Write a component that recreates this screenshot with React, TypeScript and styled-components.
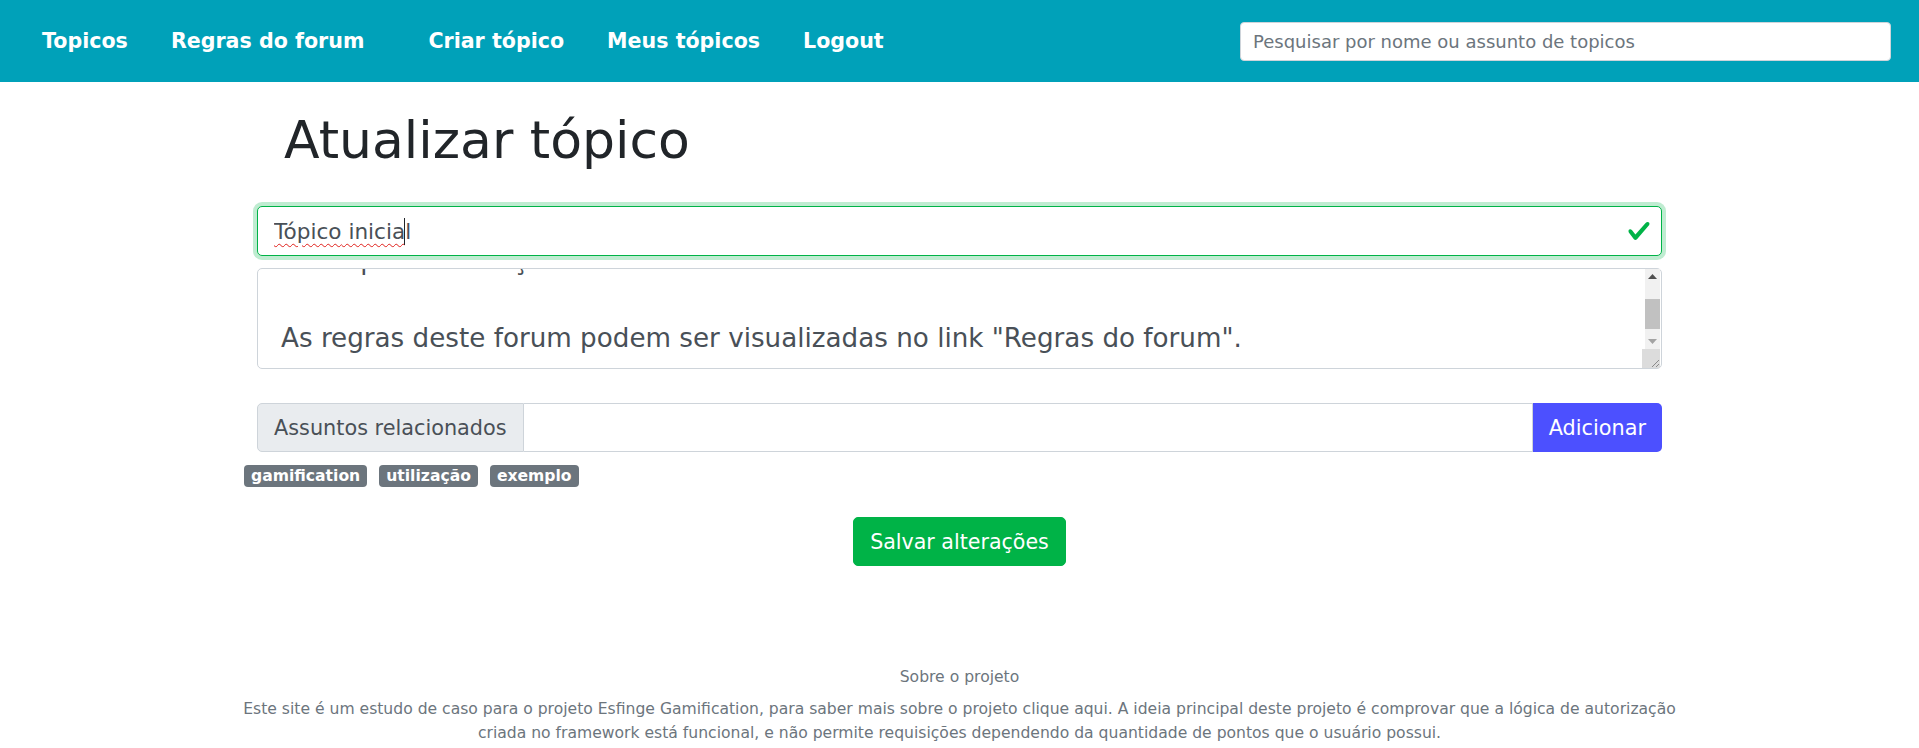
import React, { useEffect, useRef } from "react";
import styled, { createGlobalStyle } from "styled-components";

const GlobalStyle = createGlobalStyle`
  html, body { margin: 0; padding: 0; background: #fff; }
  body {
    font-family: "DejaVu Sans", Verdana, sans-serif;
    color: #212529;
  }
  * { box-sizing: border-box; }
`;

const FONT = `"DejaVu Sans", Verdana, sans-serif`;

const NavBar = styled.nav`
  height: 82px;
  background: #00a1b9;
  display: flex;
  align-items: center;
  justify-content: space-between;
  padding: 0 28px 0 20.5px;
`;

const NavGroups = styled.div`
  display: flex;
  align-items: center;
  gap: 21px;
`;

const NavGroup = styled.div`
  display: flex;
  align-items: center;
`;

const NavLink = styled.a`
  color: #fff;
  font-weight: 700;
  font-size: 20.6px;
  text-decoration: none;
  padding: 0 21.5px;
  white-space: nowrap;
`;

const SearchInput = styled.input`
  width: 651px;
  height: 39px;
  border: 1px solid #ced4da;
  border-radius: 4px;
  padding: 0 12px;
  font-family: ${FONT};
  font-size: 18px;
  color: #495057;
  background: #fff;
  &::placeholder { color: #6c757d; }
`;

const Main = styled.main`
  width: 1405px;
  margin: 0 auto;
  padding-top: 27px;
  display: flex;
  flex-direction: column;
`;

const Title = styled.h1`
  margin: 0;
  padding-left: 27px;
  font-size: 52px;
  font-weight: 400;
  line-height: 62px;
  color: #212529;
`;

const Field = styled.div`
  position: relative;
  margin-top: 35px;
`;

const TitleInput = styled.input`
  width: 100%;
  height: 50px;
  border: 1px solid #00b347;
  border-radius: 5px;
  padding: 0 48px 0 16px;
  font-family: ${FONT};
  font-size: 21.6px;
  color: #495057;
  background: #fff;
  box-shadow: 0 0 0 4px rgba(0, 179, 71, 0.25);
  outline: none;
`;

const SpellOverlay = styled.div`
  position: absolute;
  left: 17px;
  top: 0;
  height: 50px;
  display: flex;
  align-items: center;
  font-family: ${FONT};
  font-size: 21.6px;
  color: transparent;
  white-space: pre;
  pointer-events: none;
`;

const Misspelled = styled.span`
  text-decoration: underline wavy #e0201b;
  text-decoration-thickness: 1px;
  text-underline-offset: 4px;
`;

const Caret = styled.span`
  display: inline-block;
  width: 1px;
  height: 27px;
  background: #212529;
`;

const ValidIcon = styled.svg`
  position: absolute;
  right: 11px;
  top: 13px;
  width: 24px;
  height: 24px;
  pointer-events: none;
`;

const AreaWrap = styled.div`
  position: relative;
  margin-top: 12px;
`;

const TextArea = styled.textarea`
  width: 100%;
  height: 101px;
  border: 1px solid #ced4da;
  border-radius: 5px;
  padding: 8px 36px 8px 23px;
  font-family: ${FONT};
  font-size: 26.2px;
  line-height: 39px;
  color: #495057;
  background: #fff;
  resize: none;
  overflow: hidden;
  outline: none;
  display: block;
`;

const ScrollBar = styled.div`
  position: absolute;
  top: 1px;
  right: 2px;
  bottom: 1px;
  width: 15px;
  display: flex;
  flex-direction: column;
  align-items: flex-end;
  pointer-events: none;
`;

const ScrollButton = styled.div`
  width: 15px;
  height: 15px;
  background: #f1f1f1;
  display: flex;
  align-items: center;
  justify-content: center;
`;

const ScrollTrack = styled.div`
  width: 15px;
  flex: 1;
  background: #f1f1f1;
  padding-top: 15px;
`;

const ScrollThumb = styled.div`
  width: 15px;
  height: 30px;
  background: #c1c1c1;
`;

const ScrollCorner = styled.div`
  width: 18px;
  height: 19px;
  background: #dcdcdc;
  display: flex;
  align-items: flex-end;
  justify-content: flex-end;
`;

const InputGroup = styled.div`
  margin-top: 34px;
  display: flex;
  height: 49px;
`;

const GroupAddon = styled.span`
  display: flex;
  align-items: center;
  padding: 0 16px;
  background: #e9ecef;
  border: 1px solid #ced4da;
  border-radius: 5px 0 0 5px;
  font-size: 20.8px;
  color: #495057;
  white-space: nowrap;
`;

const GroupInput = styled.input`
  flex: 1;
  min-width: 0;
  border: 1px solid #ced4da;
  border-left: none;
  padding: 0 16px;
  font-family: ${FONT};
  font-size: 20.8px;
  color: #495057;
  outline: none;
`;

const AddButton = styled.button`
  border: none;
  background: #4c50ff;
  color: #fff;
  font-family: ${FONT};
  font-size: 20.8px;
  padding: 0 16px;
  border-radius: 0 5px 5px 0;
  cursor: pointer;
`;

const BadgeList = styled.div`
  margin-top: 13px;
  margin-left: -13px;
  display: flex;
  gap: 12px;
`;

const Badge = styled.span`
  display: inline-block;
  background: #6c757d;
  color: #fff;
  font-weight: 700;
  font-size: 15.6px;
  line-height: 16px;
  padding: 3px 7px;
  border-radius: 4px;
`;

const Actions = styled.div`
  margin-top: 30px;
  display: flex;
  justify-content: center;
`;

const SaveButton = styled.button`
  height: 49px;
  padding: 0 16px;
  border: 1px solid #00b347;
  background: #00b347;
  color: #fff;
  font-family: ${FONT};
  font-size: 20.6px;
  border-radius: 5px;
  cursor: pointer;
`;

const Footer = styled.footer`
  margin-top: 99px;
  display: flex;
  flex-direction: column;
  align-items: center;
  color: #6c757d;
  font-size: 15.6px;
  text-align: center;
`;

const FooterTitle = styled.p`
  margin: 0 0 8px;
  line-height: 24px;
`;

const FooterText = styled.p`
  margin: 0;
  width: 1470px;
  line-height: 24px;
`;

const content =
  "Este é o tópico inicial do forum Esfinge Gamification.\nUm tópico de criação.\n\nAs regras deste forum podem ser visualizadas no link \"Regras do forum\".\n";

export default function App() {
  const areaRef = useRef<HTMLTextAreaElement>(null);
  useEffect(() => {
    if (areaRef.current) areaRef.current.scrollTop = 75;
  }, []);

  return (
    <>
      <GlobalStyle />
      <NavBar>
        <NavGroups>
          <NavGroup>
            <NavLink href="#">Topicos</NavLink>
            <NavLink href="#">Regras do forum</NavLink>
          </NavGroup>
          <NavGroup>
            <NavLink href="#">Criar tópico</NavLink>
            <NavLink href="#">Meus tópicos</NavLink>
            <NavLink href="#">Logout</NavLink>
          </NavGroup>
        </NavGroups>
        <SearchInput placeholder="Pesquisar por nome ou assunto de topicos" />
      </NavBar>
      <Main>
        <Title>Atualizar tópico</Title>
        <Field>
          <TitleInput defaultValue="Tópico inicial" spellCheck={false} />
          <SpellOverlay aria-hidden="true">
            <Misspelled>Tópico</Misspelled> <Misspelled>inicial</Misspelled>
            <Caret />
          </SpellOverlay>
          <ValidIcon viewBox="0 0 8 8">
            <path
              fill="#00b347"
              d="M2.3 6.73L.6 4.53c-.4-1.04.46-1.4 1.1-.8l1.1 1.4 3.4-3.8c.6-.63 1.6-.27 1.2.7l-4 4.6c-.43.5-.8.4-1.1.1z"
            />
          </ValidIcon>
        </Field>
        <AreaWrap>
          <TextArea ref={areaRef} defaultValue={content} spellCheck={false} />
          <ScrollBar aria-hidden="true">
            <ScrollButton>
              <svg width="9" height="5" viewBox="0 0 9 5">
                <path d="M0 5L4.5 0L9 5Z" fill="#505050" />
              </svg>
            </ScrollButton>
            <ScrollTrack>
              <ScrollThumb />
            </ScrollTrack>
            <ScrollButton>
              <svg width="9" height="5" viewBox="0 0 9 5">
                <path d="M0 0L4.5 5L9 0Z" fill="#a3a3a3" />
              </svg>
            </ScrollButton>
            <ScrollCorner>
              <svg width="10" height="10" viewBox="0 0 10 10">
                <path d="M9 2L2 9M9 6L6 9" stroke="#8a8a8a" strokeWidth="1" />
              </svg>
            </ScrollCorner>
          </ScrollBar>
        </AreaWrap>
        <InputGroup>
          <GroupAddon>Assuntos relacionados</GroupAddon>
          <GroupInput />
          <AddButton>Adicionar</AddButton>
        </InputGroup>
        <BadgeList>
          <Badge>gamification</Badge>
          <Badge>utilização</Badge>
          <Badge>exemplo</Badge>
        </BadgeList>
        <Actions>
          <SaveButton>Salvar alterações</SaveButton>
        </Actions>
      </Main>
      <Footer>
        <FooterTitle>Sobre o projeto</FooterTitle>
        <FooterText>
          Este site é um estudo de caso para o projeto Esfinge Gamification, para saber mais sobre o projeto clique aqui. A ideia principal deste projeto é comprovar que a lógica de autorização criada no framework está funcional, e não permite requisições dependendo da quantidade de pontos que o usuário possui.
        </FooterText>
      </Footer>
    </>
  );
}
